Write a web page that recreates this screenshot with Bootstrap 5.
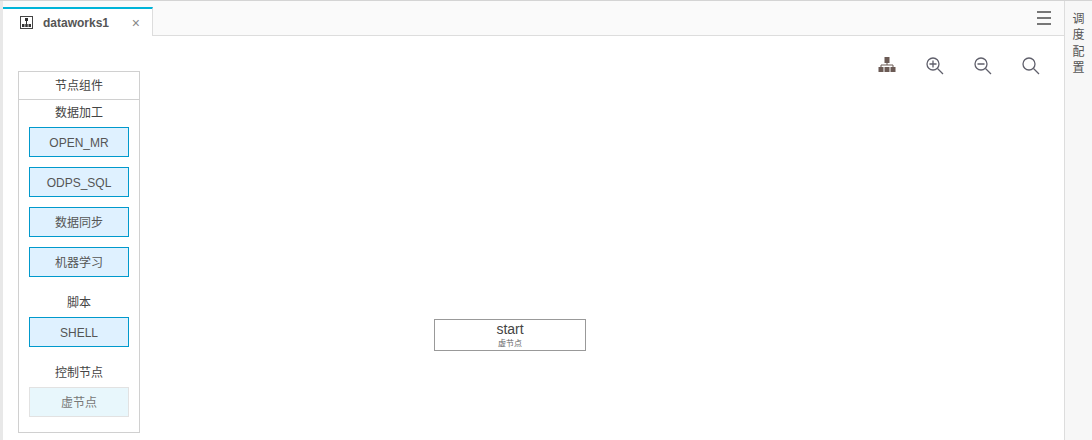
<!DOCTYPE html>
<html lang="zh">
<head>
<meta charset="utf-8">
<title>dataworks1</title>
<link rel="stylesheet" href="https://cdn.jsdelivr.net/npm/bootstrap@5.3.0/dist/css/bootstrap.min.css">
<style>
html,body{height:440px;overflow:hidden;background:#fff}
body{font-family:"Liberation Sans","Noto Sans CJK SC",sans-serif;font-size:12px;color:#444;border-top:1px solid #d4d4d4}
.shell{height:439px}
.main-area{border-left:3px solid #e8e8e8;min-width:0}
.tabstrip{height:35px;background:#fafafa;border-bottom:1px solid #ddd;padding-top:6px;padding-right:13px}
.tab-on{width:150px;height:29px;background:#fff;border-top:2px solid #00b4d8;border-right:1px solid #ddd;padding:0 12px 0 17px;margin-bottom:-1px}
.tab-name{font-size:12px;font-weight:700;color:#555;margin-left:10px}
.tab-x{font-size:14px;color:#888;margin-left:auto;line-height:1}
.burger{width:14px;height:14px;border-top:2px solid #777;border-bottom:2px solid #777;position:relative;margin-top:-6px}
.burger::after{content:"";position:absolute;left:0;right:0;top:4px;height:2px;background:#777}
.canvas{flex:1;position:relative}
.tools{gap:30px;padding:21px 24px 0 0;height:35px}
.palette{position:absolute;left:15px;top:35px;width:122px;height:362px;border:1px solid #d0d0d0;background:#fff}
.pal-head{height:28px;line-height:28px;border-bottom:1px solid #d0d0d0;text-align:center}
.pal-title{height:27px;line-height:26px;text-align:center}
.pal-group{padding:0 10px}
.pal-btn{height:30px;line-height:30px;border:1px solid #0099cc;background:#dff1ff;text-align:center;color:#555;margin-bottom:10px}
.pal-btn.soft{border:1px solid #e2e2e2;background:#e8f7fc;color:#777;margin-bottom:0}
.gap-title{margin-top:2px;height:30px;line-height:33px;text-align:center}
.flow-node{position:absolute;left:431px;top:283px;width:152px;height:32px;border:1px solid #999;background:#fff;text-align:center}
.flow-name{font-size:14px;line-height:18px;color:#444}
.flow-type{font-size:8px;line-height:12px;color:#666}
.side-tab{width:28px;background:#f7f7f7;border-left:1px solid #ddd;padding-top:10px;font-size:12px;line-height:16.4px;text-align:center;color:#555}
.side-tab span{display:block}
</style>
</head>
<body>
<div class="shell d-flex">
  <div class="main-area flex-grow-1 d-flex flex-column">
    <div class="tabstrip d-flex justify-content-between align-items-center">
      <div class="tab-on d-flex align-items-center align-self-start">
        <svg width="13" height="13" viewBox="0 0 13 13"><rect x=".5" y=".5" width="12" height="12" fill="none" stroke="#444"/><rect x="5" y="2" width="3" height="3" fill="#333"/><rect x="2" y="8" width="2.500" height="3" fill="#333"/><rect x="5.250" y="8" width="2.500" height="3" fill="#333"/><rect x="8.500" y="8" width="2.500" height="3" fill="#333"/><rect x="6" y="5" width="1" height="3" fill="#333"/></svg>
        <span class="tab-name">dataworks1</span>
        <span class="tab-x">×</span>
      </div>
      <div class="burger"></div>
    </div>
    <div class="canvas">
      <div class="tools d-flex justify-content-end align-items-start">
        <svg width="18" height="16" viewBox="0 0 18 16"><g fill="#6b5a55"><rect x="6.500" y="0" width="5" height="6"/><rect x="8.500" y="6" width="1" height="2"/><rect x="3" y="7.500" width="12" height="1"/><rect x="2.500" y="8" width="1" height="2"/><rect x="14.500" y="8" width="1" height="2"/><rect x="0.500" y="10" width="5" height="5"/><rect x="6.500" y="10" width="5" height="5"/><rect x="12.500" y="10" width="5" height="5"/></g></svg>
        <svg width="18" height="18" viewBox="0 0 18 18"><g fill="none" stroke="#5f5f6b" stroke-width="1.300"><circle cx="7" cy="7" r="6"/><path d="M11.500 11.500L17 17M3.500 7h7M7 3.500v7"/></g></svg>
        <svg width="18" height="18" viewBox="0 0 18 18"><g fill="none" stroke="#5f5f6b" stroke-width="1.300"><circle cx="7" cy="7" r="6"/><path d="M11.500 11.500L17 17M3.500 7h7"/></g></svg>
        <svg width="18" height="18" viewBox="0 0 18 18"><g fill="none" stroke="#5f5f6b" stroke-width="1.300"><circle cx="7" cy="7" r="6"/><path d="M11.500 11.500L17 17"/></g></svg>
      </div>
      <div class="palette">
        <div class="pal-head">节点组件</div>
        <div class="pal-title">数据加工</div>
        <div class="pal-group">
          <div class="pal-btn">OPEN_MR</div>
          <div class="pal-btn">ODPS_SQL</div>
          <div class="pal-btn">数据同步</div>
          <div class="pal-btn">机器学习</div>
        </div>
        <div class="gap-title">脚本</div>
        <div class="pal-group">
          <div class="pal-btn">SHELL</div>
        </div>
        <div class="gap-title">控制节点</div>
        <div class="pal-group">
          <div class="pal-btn soft">虚节点</div>
        </div>
      </div>
      <div class="flow-node">
        <div class="flow-name">start</div>
        <div class="flow-type">虚节点</div>
      </div>
    </div>
  </div>
  <div class="side-tab"><span>调</span><span>度</span><span>配</span><span>置</span></div>
</div>
<script src="https://cdn.jsdelivr.net/npm/bootstrap@5.3.0/dist/js/bootstrap.bundle.min.js"></script>
</body>
</html>
